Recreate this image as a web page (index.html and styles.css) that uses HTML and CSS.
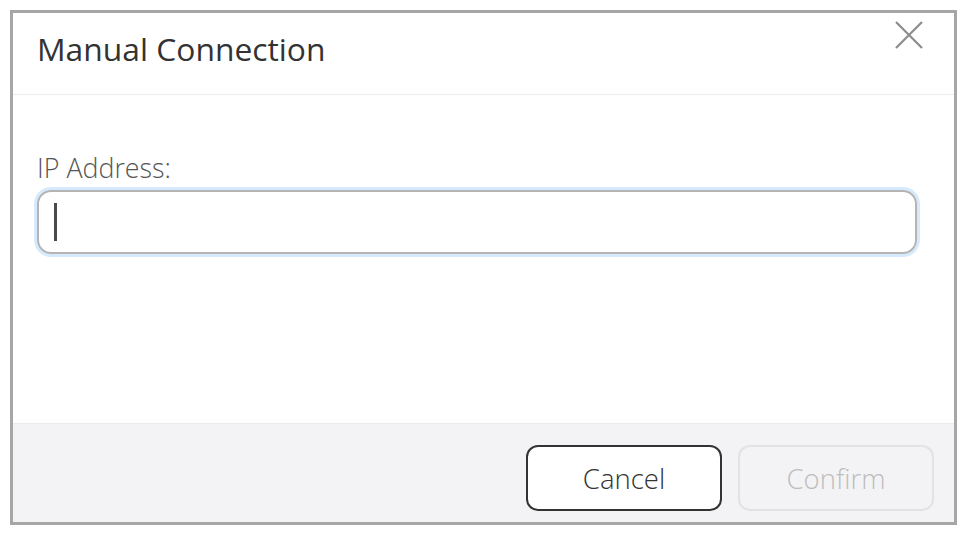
FILE: index.html
```html
<!DOCTYPE html>
<html>
<head>
<meta charset="utf-8">
<link rel="stylesheet" href="styles.css">
</head>
<body>
<div class="dialog">
  <div class="header">
    <div class="title">Manual Connection</div>
    <button class="close" aria-label="Close">
      <svg width="28" height="28" viewBox="0 0 28 28"><path d="M1 1 L27 27 M27 1 L1 27" stroke="#8c8c8c" stroke-width="2.2" fill="none"/></svg>
    </button>
  </div>
  <div class="body">
    <label class="label">IP Address:</label>
    <div class="input"><span class="caret"></span></div>
  </div>
  <div class="footer">
    <button class="btn btn-cancel">Cancel</button>
    <button class="btn btn-confirm">Confirm</button>
  </div>
</div>
</body>
</html>
```
FILE: styles.css
```css
html, body {
  margin: 0;
  padding: 0;
  background: #ffffff;
}
body {
  padding: 10px;
  font-family: "Open Sans", "Noto Sans", "Liberation Sans", sans-serif;
}
.dialog {
  width: 941px;
  height: 509px;
  border: 3px solid #a6a6a6;
  display: flex;
  flex-direction: column;
  background: #fff;
}
.header {
  height: 82px;
  border-bottom: 1px solid #ececec;
  display: flex;
  justify-content: space-between;
  align-items: flex-start;
  padding-left: 24px;
  padding-right: 31px;
  box-sizing: border-box;
}
.title {
  margin-top: 15px;
  font-size: 31.8px;
  color: #333;
  line-height: 42px;
}
.close {
  margin-top: 8px;
  padding: 0;
  border: none;
  background: none;
  width: 28px;
  height: 28px;
}
.body {
  flex: 1;
  padding: 57px 0 0 24px;
  display: flex;
  flex-direction: column;
}
.label {
  font-size: 26.8px;
  font-weight: 300;
  color: #555;
  line-height: 32px;
  margin-bottom: 6px;
}
.input {
  width: 861px;
  height: 60px;
  border: 2px solid #b4b4b4;
  border-radius: 14px;
  box-shadow: 0 0 0 3px #d6eafe;
  display: flex;
  align-items: center;
  padding-left: 15px;
  box-sizing: content-box;
}
.caret {
  width: 3px;
  height: 38px;
  background: #4a4a4a;
}
.footer {
  height: 99px;
  box-sizing: border-box;
  background: #f3f3f5;
  border-top: 1px solid #ebebeb;
  display: flex;
  justify-content: flex-end;
  align-items: flex-start;
  gap: 16px;
  padding: 21px 20px 0 0;
}
.btn {
  width: 196px;
  height: 66px;
  border-radius: 12px;
  font-family: "Open Sans", "Noto Sans", "Liberation Sans", sans-serif;
  font-size: 27.5px;
  font-weight: 300;
  padding: 0;
}
.btn-cancel {
  background: #fff;
  border: 2px solid #333;
  color: #333;
}
.btn-confirm {
  background: #f3f3f5;
  border: 2px solid #e2e2e4;
  color: #bdbdbd;
}
```
